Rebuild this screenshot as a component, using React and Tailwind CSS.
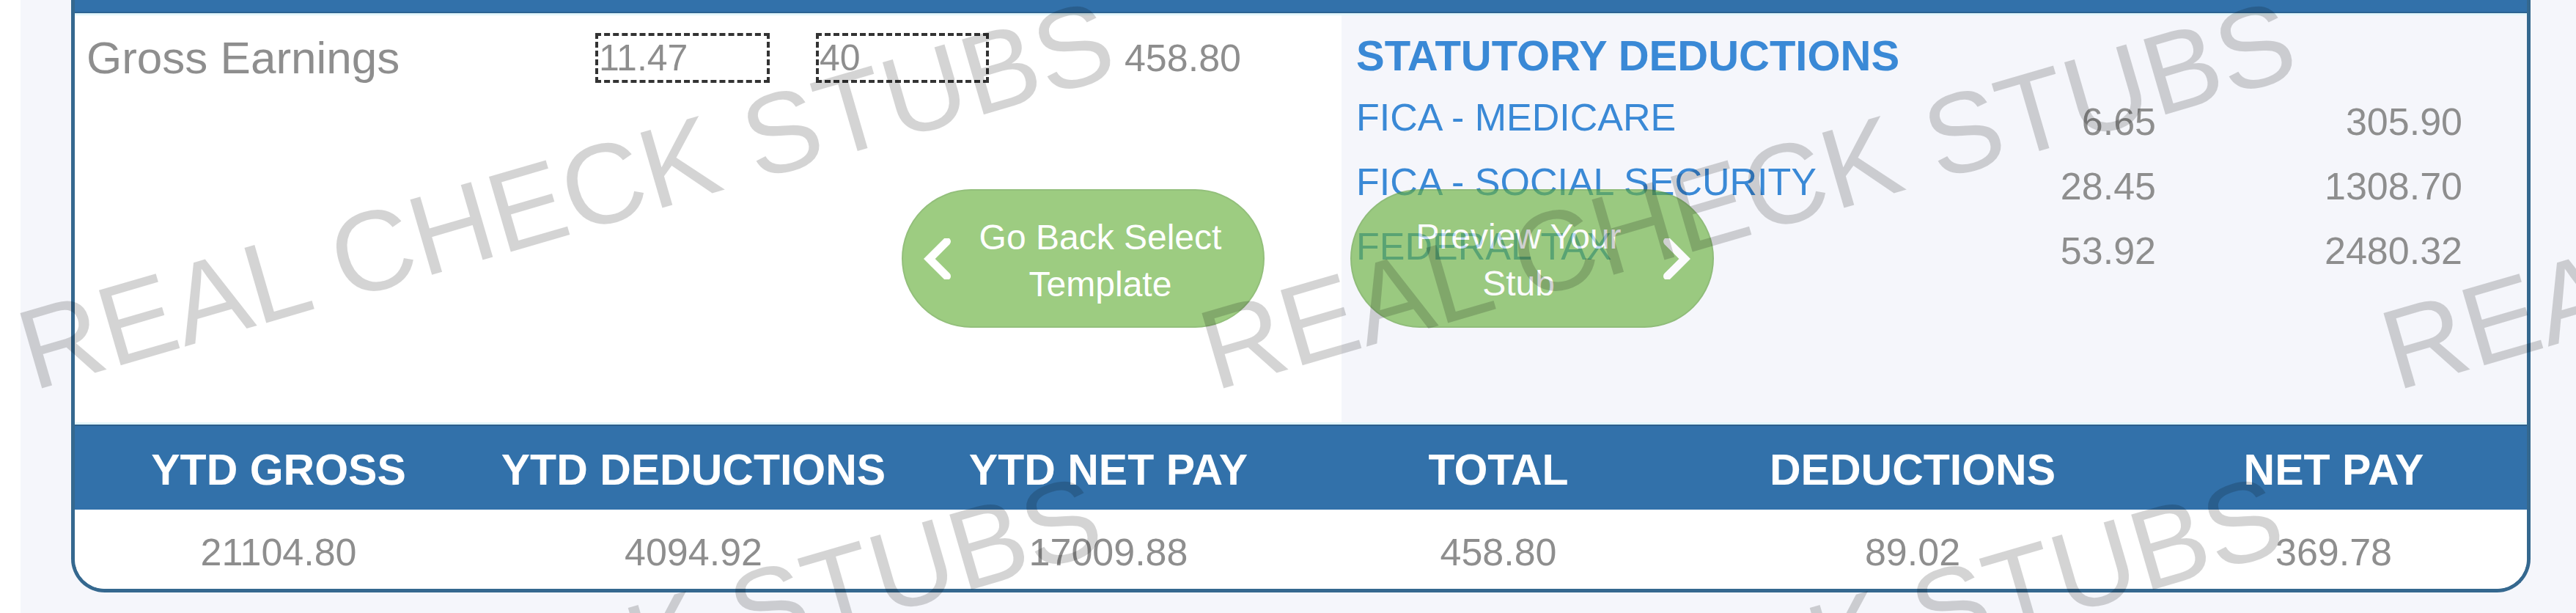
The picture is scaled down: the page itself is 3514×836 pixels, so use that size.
import React from "react";

function Chevron({ dir = "left" }) {
  const pts = dir === "left" ? "31.5,4.3 7.8,28 31.5,51.7" : "5.5,4.3 29.2,28 5.5,51.7";
  return (
    <svg width="37" height="56" viewBox="0 0 37 56" className="shrink-0">
      <polyline points={pts} fill="none" stroke="#ffffff" strokeWidth="11" strokeLinecap="round" strokeLinejoin="miter" />
    </svg>
  );
}

const marks = [
  "left-[30px] top-[404px]",
  "left-[1642px] top-[404px]",
  "left-[3254px] top-[404px]",
  "left-[13px] top-[1052px]",
  "left-[1625px] top-[1052px]",
  "left-[3237px] top-[1052px]",
];

const rows = [
  ["FICA - MEDICARE", "6.65", "305.90"],
  ["FICA - SOCIAL SECURITY", "28.45", "1308.70"],
  ["FEDERAL TAX", "53.92", "2480.32"],
];

const heads = ["YTD GROSS", "YTD DEDUCTIONS", "YTD NET PAY", "TOTAL", "DEDUCTIONS", "NET PAY"];
const vals = ["21104.80", "4094.92", "17009.88", "458.80", "89.02", "369.78"];

export default function App() {
  return (
    <div className="relative w-[3514px] h-[836px] overflow-hidden bg-white font-['Liberation_Sans',Arial,sans-serif]">
      <div className="flex h-full">
        <div className="w-[28px] shrink-0 bg-white" />
        <div className="flex-1 bg-[#f5f6fb] pl-[69px] pr-[62px]">
          <div className="relative flex flex-col overflow-hidden rounded-b-[46px] border-x-[5px] border-b-[5px] border-[#35688f] bg-white">
            <div className="h-[18px] border-b-2 border-[#2c6392] bg-[#3271aa]" />
            <div className="h-[3px] bg-[#e3f6fb]" />
            <div className="flex h-[555px]">
              <div className="flex w-[1728px] shrink-0 items-start bg-white pl-[16px] pt-[24px]">
                <div className="w-[694px] shrink-0 whitespace-nowrap pt-[2.5px] text-[62px] leading-none text-[#8e8e8e]">
                  Gross Earnings
                </div>
                <div className="flex h-[68px] w-[238px] shrink-0 items-center border-4 border-dashed border-[#333333] pl-[1px] text-[50px] leading-none text-[#8e8e8e]">
                  11.47
                </div>
                <div className="ml-[63px] flex h-[68px] w-[236px] shrink-0 items-center border-4 border-dashed border-[#333333] pl-[1px] text-[50px] leading-none text-[#8e8e8e]">
                  40
                </div>
                <div className="w-[344px] shrink-0 pt-[7.5px] text-right text-[52px] leading-none text-[#8e8e8e]">
                  458.80
                </div>
              </div>
              <div className="flex-1 bg-[#f5f6fb] pl-[20px] pr-[88px] pt-[26px]">
                <div className="whitespace-nowrap text-[58px] font-bold leading-none text-[#3a89d6]">
                  STATUTORY DEDUCTIONS
                </div>
                <div className="mt-[21px] flex flex-col">
                  {rows.map((r) => (
                    <div key={r[0]} className="flex h-[88px] items-start">
                      <div className="flex-1 whitespace-nowrap pt-[8px] text-[52px] leading-none text-[#3a89d6]">{r[0]}</div>
                      <div className="w-[300px] pt-[13.5px] text-right text-[52px] leading-none text-[#8e8e8e]">{r[1]}</div>
                      <div className="w-[418px] pt-[13.5px] text-right text-[52px] leading-none text-[#8e8e8e]">{r[2]}</div>
                    </div>
                  ))}
                </div>
              </div>
            </div>
            <div className="h-[3px] bg-[#e3f6fb]" />
            <div className="grid h-[116px] grid-cols-[556px_576px_556px_508px_622px_1fr] border-t-2 border-[#2b5f8c] bg-[#3271aa]">
              {heads.map((h) => (
                <div key={h} className="whitespace-nowrap pt-[31px] text-center text-[59px] font-bold leading-none text-white">
                  {h}
                </div>
              ))}
            </div>
            <div className="grid h-[108px] grid-cols-[556px_576px_556px_508px_622px_1fr] bg-white">
              {vals.map((v, i) => (
                <div key={i} className="pt-[32px] text-center text-[52px] leading-none text-[#8e8e8e]">
                  {v}
                </div>
              ))}
            </div>

            <div className="absolute left-[1128px] top-[258px] flex gap-[117px]">
              <div className="flex h-[189px] w-[495px] items-center rounded-full border-2 border-[#5a9e35] bg-[#6ab23f] pl-[28px] pr-[18px] opacity-[0.65]">
                <Chevron dir="left" />
                <div className="flex-1 pt-[7px] text-center text-[48px] leading-[64px] text-white">
                  Go Back Select
                  <br />
                  Template
                </div>
              </div>
              <div className="flex h-[189px] w-[496px] items-center rounded-full border-2 border-[#5a9e35] bg-[#6ab23f] pl-[30px] pr-[30px] opacity-[0.65]">
                <div className="flex-1 pt-[4px] text-center text-[48px] leading-[64px] text-white">
                  Preview Your
                  <br />
                  Stub
                </div>
                <Chevron dir="right" />
              </div>
            </div>
          </div>
        </div>
      </div>

      <div className="pointer-events-none absolute inset-0">
        {marks.map((m, i) => (
          <div
            key={i}
            className={`absolute ${m} origin-[0_50%] rotate-[-16.2deg] whitespace-nowrap text-[155px] leading-none text-[rgba(0,0,0,0.17)]`}
          >
            REAL CHECK STUBS
          </div>
        ))}
      </div>
    </div>
  );
}
